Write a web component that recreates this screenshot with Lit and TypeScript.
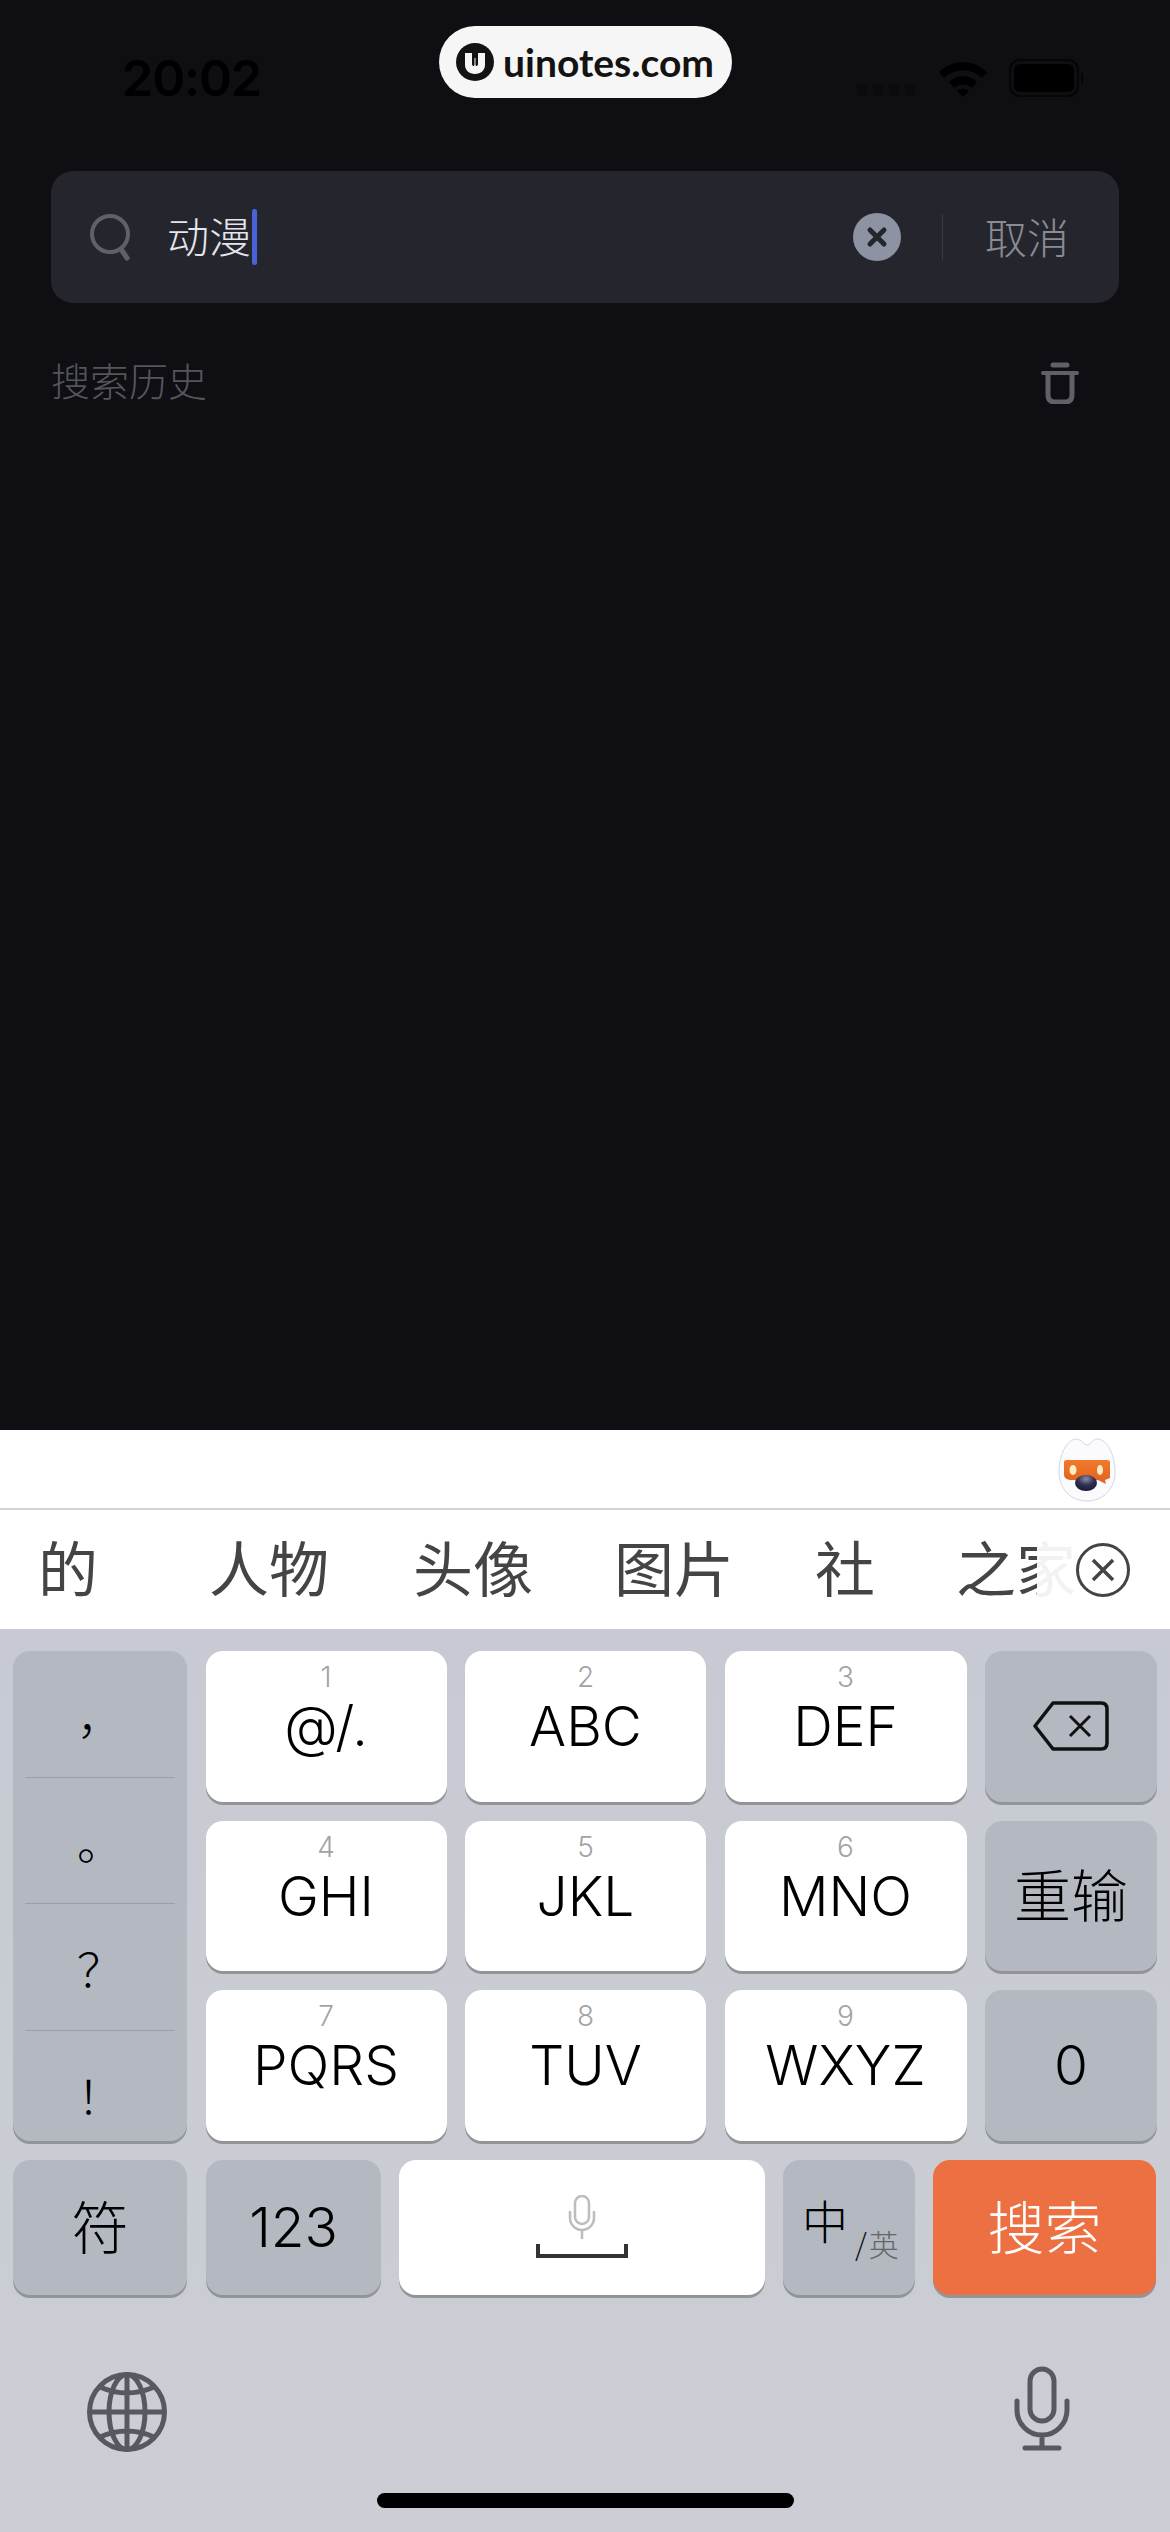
import { LitElement, html, css, svg } from 'lit';
import { customElement } from 'lit/decorators.js';

const LETTER_KEYS = [
  { num: '1', label: '@/.' },
  { num: '2', label: 'ABC' },
  { num: '3', label: 'DEF' },
  { num: '4', label: 'GHI' },
  { num: '5', label: 'JKL' },
  { num: '6', label: 'MNO' },
  { num: '7', label: 'PQRS' },
  { num: '8', label: 'TUV' },
  { num: '9', label: 'WXYZ' },
];
const CANDIDATES = ['人物', '头像', '图片', '社', '之家'];
const PUNCTUATION = ['，', '。', '？', '！'];

const micSmall = svg`
  <rect x="14" y="1" width="14" height="28" rx="7" fill="none" stroke="#bdbdbd" stroke-width="2.5"/>
  <path d="M9 16v7a12 12 0 0 0 24 0v-7M21 35v9" fill="none" stroke="#bdbdbd" stroke-width="2.5"/>`;

@customElement('app-root')
export class AppRoot extends LitElement {
  static styles = css`
    :host {
      display: block;
      width: 1170px;
      height: 2532px;
      font-family: Inter, 'Noto Sans CJK SC', sans-serif;
      overflow: hidden;
    }
    .screen {
      position: relative;
      height: 2532px;
      display: flex;
      flex-direction: column;
      background: #0e0e13;
    }
    .status {
      height: 171px;
      flex: none;
      display: flex;
      justify-content: space-between;
      padding: 50px 85px 0 122px;
      box-sizing: border-box;
      color: #000;
    }
    .time {
      font-size: 50px;
      font-weight: 600;
      line-height: 56px;
      letter-spacing: -1px;
    }
    .status-icons {
      display: flex;
      gap: 20px;
      height: 56px;
      align-items: center;
    }
    .dots {
      margin-top: 24px;
    }
    .watermark {
      position: absolute;
      left: 439px;
      top: 26px;
      width: 293px;
      height: 72px;
      border-radius: 36px;
      background: #f6f6f6;
      display: flex;
      align-items: center;
      padding-left: 17px;
      gap: 9px;
      box-sizing: border-box;
      color: #151212;
      font-family: Lato, sans-serif;
      font-weight: 700;
      font-size: 39px;
    }
    .search {
      height: 132px;
      margin: 0 51px;
      flex: none;
      background: #25262d;
      border-radius: 22px;
      display: flex;
      align-items: center;
      padding-left: 39px;
      font-family: 'Noto Sans CJK SC', sans-serif;
      font-size: 42px;
    }
    .query {
      margin: 0 0 4px 35px;
      color: #e4e5ee;
      font-weight: 300;
      line-height: 56px;
    }
    .caret {
      width: 5px;
      height: 56px;
      border-radius: 3px;
      background: #4a62d8;
      margin-left: 1px;
      margin-right: auto;
    }
    .clear {
      margin-right: 41px;
    }
    .vline {
      width: 1px;
      height: 46px;
      background: #3a3b42;
    }
    .cancel {
      margin: 0 50px 4px 42px;
      color: #8a8b93;
      font-weight: 300;
    }
    .history {
      flex: 1;
      display: flex;
      justify-content: space-between;
      align-items: flex-start;
      padding: 48px 91px 0 51px;
      color: #55565c;
      font-family: 'Noto Sans CJK SC', sans-serif;
      font-size: 39px;
      font-weight: 300;
      line-height: 56px;
    }
    .history svg {
      margin-top: 11px;
    }
    .panel {
      flex: none;
      background: #fff;
    }
    .toolbar {
      height: 78px;
      border-bottom: 2px solid #d2d2d4;
      display: flex;
      justify-content: flex-end;
      padding-right: 54px;
      align-items: flex-start;
    }
    .toolbar svg {
      margin-top: 7px;
    }
    .candidates {
      position: relative;
      height: 119px;
      overflow: hidden;
      display: flex;
      align-items: center;
      padding: 0 0 8px 38px;
      box-sizing: border-box;
      gap: 81px;
      color: #444;
      font-family: 'Noto Sans CJK SC', sans-serif;
      font-size: 60px;
      font-weight: 400;
      white-space: nowrap;
    }
    .candidates .first {
      margin-right: 30px;
    }
    .candidates .first + span {
      margin-right: 3px;
    }
    .fade {
      position: absolute;
      left: 1037px;
      top: 0;
      right: 0;
      bottom: 0;
      background: rgba(255, 255, 255, 0.93);
      display: flex;
      align-items: center;
      padding-left: 39px;
    }
    .keyboard {
      flex: none;
      height: 903px;
      box-sizing: border-box;
      padding: 22px 13px 0;
      background: linear-gradient(#c8cad3, #cbced4);
      position: relative;
    }
    .grid {
      display: grid;
      grid-template-columns: 174px 241px 241px 242px 172px;
      grid-template-rows: repeat(3, 150.5px);
      gap: 19px 18.5px;
    }
    .key {
      border-radius: 17px;
      box-shadow: 0 3px 0 #929498;
      display: flex;
      flex-direction: column;
      align-items: center;
      justify-content: center;
      color: #000;
      font-size: 55px;
      font-weight: 300;
      font-family: Inter, 'Noto Sans CJK SC', sans-serif;
    }
    .white {
      background: #fff;
    }
    .gray {
      background: #b4b8c1;
    }
    .cjk {
      font-family: 'Noto Sans CJK SC', sans-serif;
      font-size: 57px;
      padding-bottom: 7px;
      box-sizing: border-box;
    }
    .letter {
      justify-content: flex-start;
      padding-top: 12px;
    }
    .num {
      font-size: 28px;
      line-height: 28px;
      color: #a3a3a6;
    }
    .label {
      line-height: 62px;
      margin-top: 4px;
    }
    .punct {
      grid-row: span 3;
      justify-content: flex-start;
      align-items: stretch;
      font-family: 'Noto Sans CJK SC', sans-serif;
      font-size: 46px;
    }
    .punct div {
      height: 126.5px;
      margin: 0 12px;
      display: flex;
      align-items: center;
      justify-content: center;
      border-bottom: 1px solid #9b9ea7;
      box-sizing: border-box;
    }
    .punct div:last-child {
      border-bottom: none;
      height: 108px;
      padding-top: 18px;
    }
    .bottom-row {
      display: flex;
      height: 135px;
      margin-top: 19px;
      gap: 18px;
    }
    .bottom-row .key {
      flex: none;
      height: 135px;
    }
    .sym {
      width: 174px;
      margin-right: 1px;
    }
    .num-key {
      width: 175px;
    }
    .space {
      width: 366px;
    }
    .lang {
      width: 132px;
      flex-direction: row;
      align-items: flex-start;
      justify-content: flex-start;
      padding: 29px 0 0 19px;
      box-sizing: border-box;
      font-family: 'Noto Sans CJK SC', sans-serif;
      font-size: 46px;
      line-height: 60px;
    }
    .lang small {
      font-size: 30px;
      line-height: 40px;
      color: #666;
      margin: 34px 0 0 7px;
    }
    .lang small i {
      color: #111;
      font-style: normal;
      margin-right: 2px;
    }
    .go {
      width: 223px;
      background: #ec7041;
      color: #fff;
    }
    .sys {
      position: absolute;
      left: 86px;
      right: 99px;
      top: 736px;
      display: flex;
      justify-content: space-between;
      align-items: flex-start;
    }
    .sys .globe {
      margin-top: 6px;
    }
    .home {
      position: absolute;
      left: 377px;
      top: 864px;
      width: 417px;
      height: 15px;
      border-radius: 8px;
      background: #000;
    }
  `;

  renderStatusIcons() {
    return html`
      <svg class="dots" width="60" height="14" viewBox="0 0 60 14">
        ${[0, 16, 32, 48].map(x => svg`<rect x=${x} y="1" width="10" height="12" rx="2" fill="#0b0b0f"/>`)}
      </svg>
      <svg width="52" height="38" viewBox="0 0 52 38">
        <path d="M2 13a34 34 0 0 1 48 0l-5 6a27 27 0 0 0-38 0z" fill="#000"/>
        <path d="M12 23a20 20 0 0 1 28 0l-5 6a13 13 0 0 0-18 0z" fill="#000"/>
        <path d="M20 32a9 9 0 0 1 12 0l-6 6z" fill="#000"/>
      </svg>
      <svg width="76" height="38" viewBox="0 0 76 38">
        <rect x="1" y="1" width="68" height="36" rx="10" fill="none" stroke="#050507" stroke-width="2"/>
        <rect x="5" y="5" width="60" height="28" rx="6" fill="#000"/>
        <path d="M72 13c3 1 3 11 0 12z" fill="#050507"/>
      </svg>
    `;
  }

  renderMascot() {
    return html`
      <svg width="58" height="66" viewBox="0 0 58 66">
        <defs>
          <linearGradient id="band" x1="0" y1="0" x2="0" y2="1">
            <stop offset="0" stop-color="#f07a2c"/>
            <stop offset="1" stop-color="#e4601c"/>
          </linearGradient>
          <radialGradient id="nose" cx="0.5" cy="0.25" r="0.7">
            <stop offset="0" stop-color="#8a8ca6"/>
            <stop offset="0.55" stop-color="#2f3052"/>
            <stop offset="1" stop-color="#1c1d38"/>
          </radialGradient>
        </defs>
        <path d="M29 8C26 8 23 2 19 2 8 2 1 19 1 35c0 17 12 29 28 29s28-12 28-29C57 19 50 2 39 2c-4 0-7 6-10 6z"
          fill="#fbfbfd" stroke="#d3d6e6" stroke-width="1"/>
        <path d="M6 25q0-2 3-2h40q3 0 3 2v16l-5 2 1 4-8-4H12q-6-1-6-5z" fill="url(#band)"/>
        <ellipse cx="15" cy="33" rx="3.500" ry="5" fill="#ffeec4"/>
        <ellipse cx="42" cy="33" rx="3" ry="5" fill="#ffeec4"/>
        <ellipse cx="28" cy="46" rx="11" ry="8" fill="url(#nose)"/>
      </svg>
    `;
  }

  render() {
    return html`
      <div class="screen">
        <div class="status">
          <div class="time">20:02</div>
          <div class="status-icons">${this.renderStatusIcons()}</div>
        </div>
        <div class="watermark">
          <svg width="38" height="38" viewBox="0 0 38 38">
            <circle cx="19" cy="19" r="19" fill="#151212"/>
            <path d="M9 10h7v11c0 1.500 1 2 1.500 2s1-.5 1-2v-6h1v6c0 1.500.5 2 1 2s1.500-.5 1.500-2V10h7v12c0 5-4 9-10 9s-10-4-10-9z" fill="#f6f6f6"/>
          </svg>
          <span>uinotes.com</span>
        </div>

        <div class="search">
          <svg width="42" height="48" viewBox="0 0 42 48">
            <ellipse cx="20" cy="21" rx="18" ry="18" fill="none" stroke="#5f6068" stroke-width="4"/>
            <path d="M31 36l6 9" stroke="#5f6068" stroke-width="5" stroke-linecap="round"/>
          </svg>
          <span class="query">动漫</span>
          <span class="caret"></span>
          <svg class="clear" width="48" height="48" viewBox="0 0 48 48">
            <circle cx="24" cy="24" r="24" fill="#8d93a3"/>
            <path d="M17 17l14 14M31 17L17 31" stroke="#25262d" stroke-width="5" stroke-linecap="round"/>
          </svg>
          <span class="vline"></span>
          <span class="cancel">取消</span>
        </div>

        <div class="history">
          <span>搜索历史</span>
          <svg width="38" height="42" viewBox="0 0 38 42">
            <path d="M12 3h14" stroke="#5f6068" stroke-width="5" stroke-linecap="round"/>
            <path d="M2 11h34" stroke="#5f6068" stroke-width="4" stroke-linecap="round"/>
            <path d="M7 11v22q0 7 7 7h10q7 0 7-7V11" fill="none" stroke="#5f6068" stroke-width="5"/>
          </svg>
        </div>

        <div class="panel">
          <div class="toolbar">${this.renderMascot()}</div>
          <div class="candidates">
            <span class="first">的</span>
            ${CANDIDATES.map(c => html`<span>${c}</span>`)}
            <div class="fade">
              <svg width="54" height="54" viewBox="0 0 54 54">
                <circle cx="27" cy="27" r="25.500" fill="none" stroke="#444" stroke-width="3"/>
                <path d="M17 17l20 20M37 17L17 37" stroke="#444" stroke-width="3.500"/>
              </svg>
            </div>
          </div>
        </div>

        <div class="keyboard">
          <div class="grid">
            <div class="key gray punct">
              ${PUNCTUATION.map(p => html`<div>${p}</div>`)}
            </div>
            ${LETTER_KEYS.slice(0, 3).map(k => this.renderLetter(k))}
            <div class="key gray">
              <svg width="76" height="50" viewBox="0 0 76 50">
                <path d="M20 2h48q6 0 6 6v34q0 6-6 6H20L2 25z" fill="none" stroke="#111" stroke-width="3.500" stroke-linejoin="round"/>
                <path d="M37 15l20 20M57 15L37 35" stroke="#111" stroke-width="3"/>
              </svg>
            </div>
            ${LETTER_KEYS.slice(3, 6).map(k => this.renderLetter(k))}
            <div class="key gray cjk">重输</div>
            ${LETTER_KEYS.slice(6, 9).map(k => this.renderLetter(k))}
            <div class="key gray">0</div>
          </div>
          <div class="bottom-row">
            <div class="key gray sym cjk">符</div>
            <div class="key gray num-key">123</div>
            <div class="key white space">
              <svg width="92" height="64" viewBox="0 0 92 64">
                <g transform="translate(25 0)">${micSmall}</g>
                <path d="M2 49v12h88V49" fill="none" stroke="#333" stroke-width="4"/>
              </svg>
            </div>
            <div class="key gray lang">中<small><i>/</i>英</small></div>
            <div class="key go cjk">搜索</div>
          </div>
          <div class="sys">
            <svg class="globe" width="82" height="82" viewBox="0 0 82 82" fill="none" stroke="#565a60" stroke-width="5">
              <circle cx="41" cy="41" r="37.500"/>
              <ellipse cx="41" cy="41" rx="18" ry="37.500"/>
              <path d="M41 3v76M3 41h76M14 16q27 12 54 0M14 66q27-12 54 0"/>
            </svg>
            <svg width="58" height="88" viewBox="0 0 58 88" fill="none" stroke="#565a60" stroke-width="5" stroke-linecap="round">
              <rect x="17" y="4" width="24" height="52" rx="12"/>
              <path d="M4 36v9a25 25 0 0 0 50 0v-9M29 70v13M12 83h34"/>
            </svg>
          </div>
          <div class="home"></div>
        </div>
      </div>
    `;
  }

  renderLetter(k: { num: string; label: string }) {
    return html`
      <div class="key white letter">
        <span class="num">${k.num}</span>
        <span class="label">${k.label}</span>
      </div>
    `;
  }
}
